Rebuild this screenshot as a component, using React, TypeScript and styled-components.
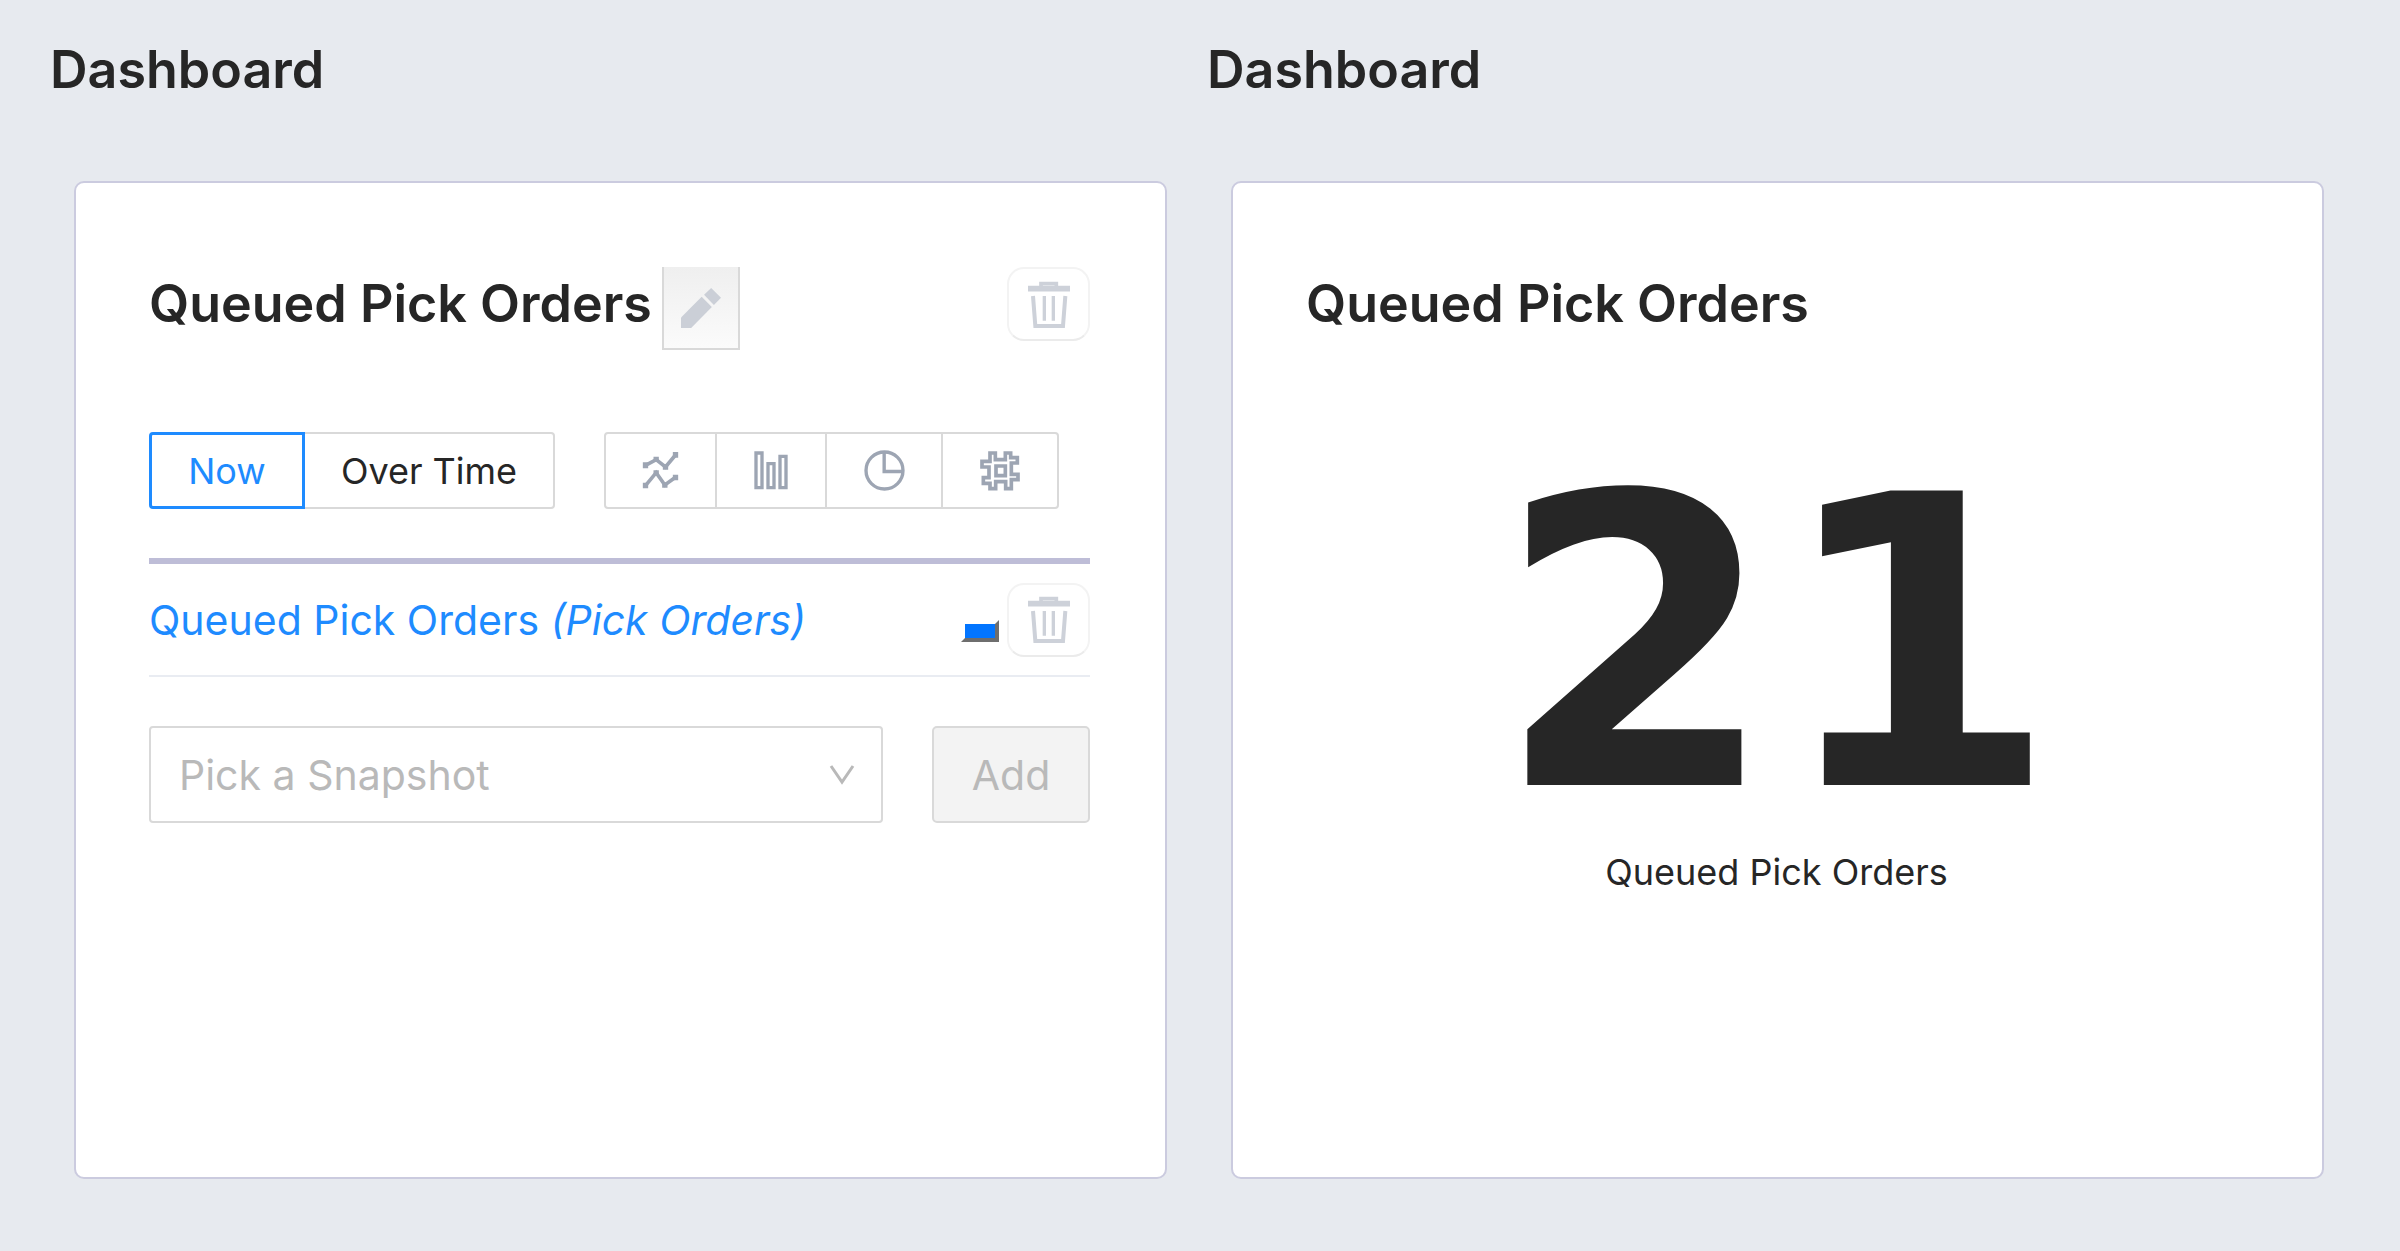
import { useState } from "react";
import type { ReactNode } from "react";
import styled, { createGlobalStyle } from "styled-components";

const color = {
  page: "#e7eaef",
  card: "#ffffff",
  cardBorder: "#cbcbdf",
  rule: "#bebdd7",
  ink: "#262626",
  blue: "#1e8bff",
  line: "#d9d9d9",
  faintLine: "#e9ecf2",
  muted: "#b9b9b9",
  icon: "#9da5b3",
  iconFaint: "#cdd1d9",
};

const GlobalStyle = createGlobalStyle`
  *, *::before, *::after { box-sizing: border-box; }
  body {
    margin: 0;
    background: ${color.page};
    color: ${color.ink};
    font-family: Inter, "Open Sans", sans-serif;
    font-size: 36px;
    line-height: 48px;
  }
  button, select, input { font: inherit; }
`;

const Page = styled.main`
  display: grid;
  grid-template-columns: repeat(2, minmax(0, 1fr));
  gap: 12px;
  min-height: 100vh;
  padding: 32px 50px 72px 48px;
`;

const Column = styled.section`
  display: flex;
  flex-direction: column;
  gap: 74px;
`;

const PageTitle = styled.h1`
  margin: 0;
  padding: 0 2px;
  font-size: 52px;
  font-weight: 600;
  line-height: 75px;
`;

const Card = styled.article`
  display: flex;
  flex: 1;
  flex-direction: column;
  margin: 0 26px;
  padding: 84px 75px 84px 73px;
  background: ${color.card};
  border: 2px solid ${color.cardBorder};
  border-radius: 10px;
`;

const CardHeader = styled.header`
  display: flex;
  align-items: flex-start;
  gap: 10px;
`;

const CardTitle = styled.h2`
  margin: 0;
  font-size: 52px;
  font-weight: 600;
  line-height: 74px;
  white-space: nowrap;
`;

const EditButton = styled.button`
  display: flex;
  align-items: center;
  justify-content: center;
  width: 78px;
  height: 83px;
  padding: 0;
  background: linear-gradient(#efefef, #fbfbfb);
  border: 2px solid ${color.line};
  border-top: 0;
  cursor: pointer;
`;

const DeleteButton = styled.button<{ $pushed?: boolean }>`
  display: flex;
  flex: none;
  align-items: center;
  justify-content: center;
  width: 83px;
  height: 74px;
  margin-left: ${({ $pushed }) => ($pushed ? "auto" : "0")};
  padding: 0;
  background: ${color.card};
  border: 2px solid #f3f3f3;
  border-bottom-color: #ebebeb;
  border-radius: 17px;
  cursor: pointer;
`;

const Controls = styled.div`
  display: flex;
  gap: 49px;
  margin-top: 82px;
`;

const Segments = styled.fieldset`
  display: flex;
  margin: 0;
  padding: 0;
  border: 0;
`;

const Segment = styled.label<{ $active?: boolean; $width: number }>`
  position: relative;
  display: flex;
  align-items: center;
  justify-content: center;
  width: ${({ $width }) => $width}px;
  height: 77px;
  margin-right: -2px;
  color: ${({ $active }) => ($active ? color.blue : color.ink)};
  border: ${({ $active }) => ($active ? `3px solid ${color.blue}` : `2px solid ${color.line}`)};
  z-index: ${({ $active }) => ($active ? 1 : 0)};
  white-space: nowrap;
  cursor: pointer;

  &:first-of-type { border-radius: 4px 0 0 4px; }
  &:last-of-type { margin-right: 0; border-radius: 0 4px 4px 0; }
`;

const HiddenRadio = styled.input`
  position: absolute;
  inset: 0;
  margin: 0;
  opacity: 0;
  cursor: pointer;
`;

const SnapshotList = styled.ul`
  margin: 49px 0 0;
  padding: 0;
  list-style: none;
  border-top: 6px solid ${color.rule};
`;

const SnapshotRow = styled.li`
  display: flex;
  align-items: center;
  justify-content: space-between;
  height: 113px;
  border-bottom: 2px solid ${color.faintLine};
`;

const SnapshotLink = styled.a`
  color: ${color.blue};
  font-size: 41px;
  text-decoration: none;
  white-space: nowrap;
`;

const RowActions = styled.div`
  display: flex;
  align-items: flex-end;
  gap: 8px;
`;

const ColorSwatch = styled.button`
  width: 38px;
  height: 22px;
  margin-bottom: 15px;
  padding: 0;
  background: #0275ff;
  border: 4px solid;
  border-color: #ffffff #6e6e6e #6e6e6e #ffffff;
  cursor: pointer;
`;

const AddForm = styled.form`
  display: flex;
  gap: 49px;
  margin-top: 49px;
  font-size: 41px;
`;

const SelectField = styled.div`
  display: grid;
  flex: 1;
  align-items: center;

  > * { grid-area: 1 / 1; }
  > svg { justify-self: end; margin-right: 28px; pointer-events: none; }
`;

const Select = styled.select`
  width: 100%;
  height: 97px;
  padding: 0 80px 0 28px;
  appearance: none;
  color: ${color.muted};
  background: ${color.card};
  border: 2px solid ${color.line};
  border-radius: 4px;
`;

const AddButton = styled.button`
  width: 158px;
  height: 97px;
  padding: 0;
  color: ${color.muted};
  background: #f3f3f3;
  border: 2px solid ${color.line};
  border-radius: 5px;
`;

const Metric = styled.figure`
  display: flex;
  flex-direction: column;
  align-items: center;
  margin: 104px 0 0;
`;

const MetricValue = styled.strong`
  font-family: "DejaVu Sans", sans-serif;
  font-size: 404px;
  font-weight: 700;
  line-height: 400px;
`;

const MetricLabel = styled.figcaption`
  margin-top: 3px;
`;

const TrashIcon = () => (
  <svg width="42" height="47" viewBox="0 0 126 141" fill="none" stroke={color.iconFaint} aria-hidden="true">
    <path d="M0 23H126" strokeWidth="17" />
    <path d="M39 20V8H85V20" strokeWidth="11" />
    <path d="M15 45L22 135H105L112 45" strokeWidth="12" />
    <path d="M49 45V119M76 45V119" strokeWidth="10" />
  </svg>
);

const PencilIcon = () => (
  <svg width="40" height="40" viewBox="0 0 118 118" fill="#cbcfd7" aria-hidden="true">
    <path d="M0 87L61 26L91 56L30 118H0Z" />
    <path d="M68 20L89 0L118 29L97 50Z" />
  </svg>
);

const LinesIcon = () => (
  <svg width="37" height="39" viewBox="0 0 110 117" fill="none" stroke={color.icon} strokeWidth="11" aria-hidden="true">
    <path d="M10 43L42 26L70 48L100 12M10 104L42 65L68 102L100 79" />
    <path
      d="M10 34V52M42 17V33M70 40V56M100 3V20M10 95V112M42 58V74M68 94V110M100 71V88"
      strokeWidth="16"
    />
  </svg>
);

const BarsIcon = () => (
  <svg width="34" height="39" viewBox="0 0 102 117" fill="none" stroke={color.icon} strokeWidth="10" aria-hidden="true">
    <path d="M6 6H24V110H6ZM42 38H60V110H42ZM78 16H96V110H78Z" />
  </svg>
);

const PieIcon = () => (
  <svg width="41" height="41" viewBox="0 0 122 122" fill="none" stroke={color.icon} strokeWidth="10" aria-hidden="true">
    <circle cx="61" cy="61" r="55" />
    <path d="M60 5V64H117" />
  </svg>
);

const HashIcon = () => (
  <svg width="40" height="40" viewBox="0 0 120 120" fill="none" stroke={color.icon} strokeWidth="11" aria-hidden="true">
    <path d="M30 6H46V26H76V6H92V20H112V36H94V70H114V86H94V113H77V92H47V113H30V97H10V80H27V48H6V31H30Z" />
    <path d="M48 45H76V74H48Z" />
  </svg>
);

const ChevronIcon = () => (
  <svg width="26" height="22" viewBox="0 0 26 22" fill="none" stroke={color.muted} strokeWidth="3" aria-hidden="true">
    <path d="M2 2L13 18L24 2" />
  </svg>
);

const ranges = [
  { name: "Now", width: 156 },
  { name: "Over Time", width: 252 },
];

const charts: { name: string; width: number; icon: ReactNode }[] = [
  { name: "Line chart", width: 113, icon: <LinesIcon /> },
  { name: "Bar chart", width: 112, icon: <BarsIcon /> },
  { name: "Pie chart", width: 118, icon: <PieIcon /> },
  { name: "Number", width: 118, icon: <HashIcon /> },
];

export default function App() {
  const [range, setRange] = useState("Now");
  const [chart, setChart] = useState("");

  return (
    <>
      <GlobalStyle />
      <Page>
        <Column>
          <PageTitle>Dashboard</PageTitle>
          <Card>
            <CardHeader>
              <CardTitle>Queued Pick Orders</CardTitle>
              <EditButton type="button" aria-label="Edit title">
                <PencilIcon />
              </EditButton>
              <DeleteButton type="button" aria-label="Delete card" $pushed>
                <TrashIcon />
              </DeleteButton>
            </CardHeader>
            <Controls>
              <Segments aria-label="Time range">
                {ranges.map(({ name, width }) => (
                  <Segment key={name} $width={width} $active={range === name}>
                    <HiddenRadio type="radio" name="range" checked={range === name} onChange={() => setRange(name)} />
                    {name}
                  </Segment>
                ))}
              </Segments>
              <Segments aria-label="Chart type">
                {charts.map(({ name, width, icon }) => (
                  <Segment key={name} $width={width} $active={chart === name}>
                    <HiddenRadio
                      type="radio"
                      name="chart"
                      aria-label={name}
                      checked={chart === name}
                      onChange={() => setChart(name)}
                    />
                    {icon}
                  </Segment>
                ))}
              </Segments>
            </Controls>
            <SnapshotList>
              <SnapshotRow>
                <SnapshotLink href="#snapshot">
                  Queued Pick Orders <em>(Pick Orders)</em>
                </SnapshotLink>
                <RowActions>
                  <ColorSwatch type="button" aria-label="Series color" />
                  <DeleteButton type="button" aria-label="Delete snapshot">
                    <TrashIcon />
                  </DeleteButton>
                </RowActions>
              </SnapshotRow>
            </SnapshotList>
            <AddForm>
              <SelectField>
                <Select aria-label="Snapshot" defaultValue="">
                  <option value="">Pick a Snapshot</option>
                </Select>
                <ChevronIcon />
              </SelectField>
              <AddButton type="button" disabled>
                Add
              </AddButton>
            </AddForm>
          </Card>
        </Column>
        <Column>
          <PageTitle>Dashboard</PageTitle>
          <Card>
            <CardHeader>
              <CardTitle>Queued Pick Orders</CardTitle>
            </CardHeader>
            <Metric>
              <MetricValue>21</MetricValue>
              <MetricLabel>Queued Pick Orders</MetricLabel>
            </Metric>
          </Card>
        </Column>
      </Page>
    </>
  );
}
